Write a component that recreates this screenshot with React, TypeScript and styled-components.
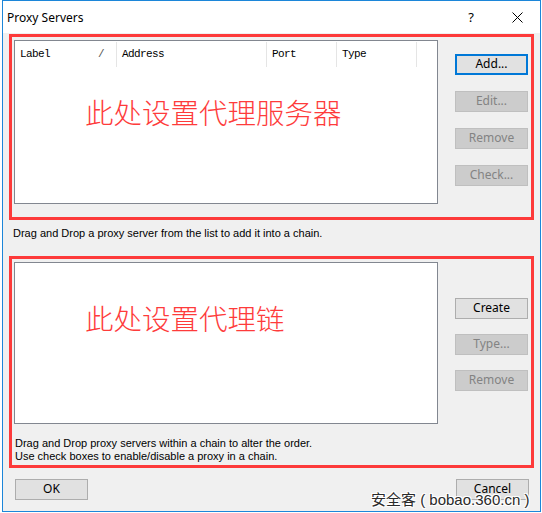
import { createGlobalStyle, styled } from "styled-components"

const GlobalStyle = createGlobalStyle`
  html, body {
    margin: 0;
    padding: 0;
    background: #ffffff;
  }
  body {
    font-family: "Liberation Sans", "Noto Sans", sans-serif;
  }
`

const Window = styled.div`
  position: relative;
  box-sizing: border-box;
  margin-left: 2px;
  width: 539px;
  height: 512px;
  border: 1px solid #1c86d9;
  display: flex;
  flex-flow: column nowrap;
  background: #f0f0f0;
`

const TitleBar = styled.div`
  height: 32px;
  flex: none;
  background: #ffffff;
  display: flex;
  align-items: center;
  padding-left: 4px;
  font-family: "Noto Sans", sans-serif;
  font-size: 12px;
  color: #000;
`

const Title = styled.span`
  flex: 1;
`

const TitleHelp = styled.span`
  width: 46px;
  text-align: center;
  font-size: 13px;
  padding-left: 3px;
`

const TitleClose = styled.span`
  width: 46px;
  display: flex;
  justify-content: center;
  align-items: center;
`

const Body = styled.div`
  flex: 1;
  display: flex;
  flex-flow: column nowrap;
  padding-top: 1px;
`

const Marked = styled.section<{ $height: number }>`
  box-sizing: border-box;
  margin: 0 6px;
  height: ${p => p.$height}px;
  border: 3px solid #fd3a3a;
  padding: 3px 0 0 2px;
`

const Row = styled.div`
  display: flex;
  align-items: flex-start;
`

const ListView = styled.div<{ $height: number }>`
  position: relative;
  box-sizing: border-box;
  width: 424px;
  height: ${p => p.$height}px;
  border: 1px solid #828790;
  background: #ffffff;
  flex: none;
`

const Header = styled.div`
  display: flex;
  height: 25px;
  margin-top: 1px;
`

const HeaderCell = styled.div<{ $width: number }>`
  box-sizing: border-box;
  width: ${p => p.$width}px;
  display: flex;
  align-items: center;
  justify-content: space-between;
  padding: 0 12px 1px 5px;
  border-right: 1px solid #e5e5e5;
  font-family: "Liberation Mono", "Courier New", monospace;
  font-size: 11px;
  letter-spacing: -0.6px;
  color: #000;
`

const SortMark = styled.span`
  color: #555;
  font-size: 11px;
`

const Annotation = styled.div`
  position: absolute;
  left: 70px;
  font-family: "Noto Sans CJK SC", sans-serif;
  font-weight: 300;
  font-size: 28.5px;
  color: #fe3b3b;
`

const ButtonColumn = styled.div<{ $top: number; $gap: number }>`
  display: flex;
  flex-flow: column nowrap;
  margin-left: 17px;
  padding-top: ${p => p.$top}px;
  gap: ${p => p.$gap}px;
`

const Button = styled.button<{ $variant?: "default" | "disabled" }>`
  box-sizing: border-box;
  width: 73px;
  height: 21px;
  padding: 0 0 1px;
  margin: 0;
  font-family: "Noto Sans", "Liberation Sans", sans-serif;
  font-size: 12px;
  line-height: 16px;
  background: ${p => (p.$variant === "disabled" ? "#cccccc" : "#e1e1e1")};
  color: ${p => (p.$variant === "disabled" ? "#838383" : "#000000")};
  border: ${p =>
    p.$variant === "default"
      ? "2px solid #0078d7"
      : p.$variant === "disabled"
      ? "1px solid #bfbfbf"
      : "1px solid #adadad"};
`

const Hint = styled.div`
  margin: 5px 0 15px 10px;
  font-size: 11px;
  line-height: 16px;
  color: #000;
`

const Notes = styled.div`
  margin-top: 13px;
  padding-left: 1px;
  font-size: 11px;
  line-height: 13px;
  color: #000;
`

const Footer = styled.div`
  display: flex;
  justify-content: space-between;
  padding: 11px 11px 0 12px;
`

const Watermark = styled.div`
  position: absolute;
  left: 368px;
  top: 489px;
  font-family: "Liberation Sans", "Noto Sans CJK SC", sans-serif;
  font-size: 15px;
  line-height: 20px;
  color: #2a2a2a;
  white-space: pre;
  text-shadow: 1px 1px 0 #fff, -1px -1px 0 #fff, 1px -1px 0 #fff, -1px 1px 0 #fff;
`

const columns = [
  { label: "Label", width: 102, sort: true },
  { label: "Address", width: 150 },
  { label: "Port", width: 70 },
  { label: "Type", width: 80 },
]

export default function App() {
  return (
    <>
      <GlobalStyle />
      <Window>
        <TitleBar>
          <Title>Proxy Servers</Title>
          <TitleHelp>?</TitleHelp>
          <TitleClose>
            <svg width="11" height="11" viewBox="0 0 11 11">
              <path d="M0.5 0.5 L10.5 10.5 M10.5 0.5 L0.5 10.5" stroke="#000" strokeWidth="1" fill="none" />
            </svg>
          </TitleClose>
        </TitleBar>
        <Body>
          <Marked $height={186}>
            <Row>
              <ListView $height={164}>
                <Header>
                  {columns.map(c => (
                    <HeaderCell key={c.label} $width={c.width}>
                      <span>{c.label}</span>
                      {c.sort && <SortMark>/</SortMark>}
                    </HeaderCell>
                  ))}
                </Header>
                <Annotation style={{ top: 50 }}>此处设置代理服务器</Annotation>
              </ListView>
              <ButtonColumn $top={14} $gap={16}>
                <Button $variant="default">Add...</Button>
                <Button $variant="disabled">Edit...</Button>
                <Button $variant="disabled">Remove</Button>
                <Button $variant="disabled">Check...</Button>
              </ButtonColumn>
            </Row>
          </Marked>
          <Hint>Drag and Drop a proxy server from the list to add it into a chain.</Hint>
          <Marked $height={212}>
            <Row>
              <ListView $height={162}>
                <Annotation style={{ top: 34 }}>此处设置代理链</Annotation>
              </ListView>
              <ButtonColumn $top={36} $gap={15}>
                <Button>Create</Button>
                <Button $variant="disabled">Type...</Button>
                <Button $variant="disabled">Remove</Button>
              </ButtonColumn>
            </Row>
            <Notes>
              Drag and Drop proxy servers within a chain to alter the order.
              <br />
              Use check boxes to enable/disable a proxy in a chain.
            </Notes>
          </Marked>
          <Footer>
            <Button>OK</Button>
            <Button>Cancel</Button>
          </Footer>
        </Body>
        <Watermark>安全客 ( bobao.360.cn )</Watermark>
      </Window>
    </>
  )
}
